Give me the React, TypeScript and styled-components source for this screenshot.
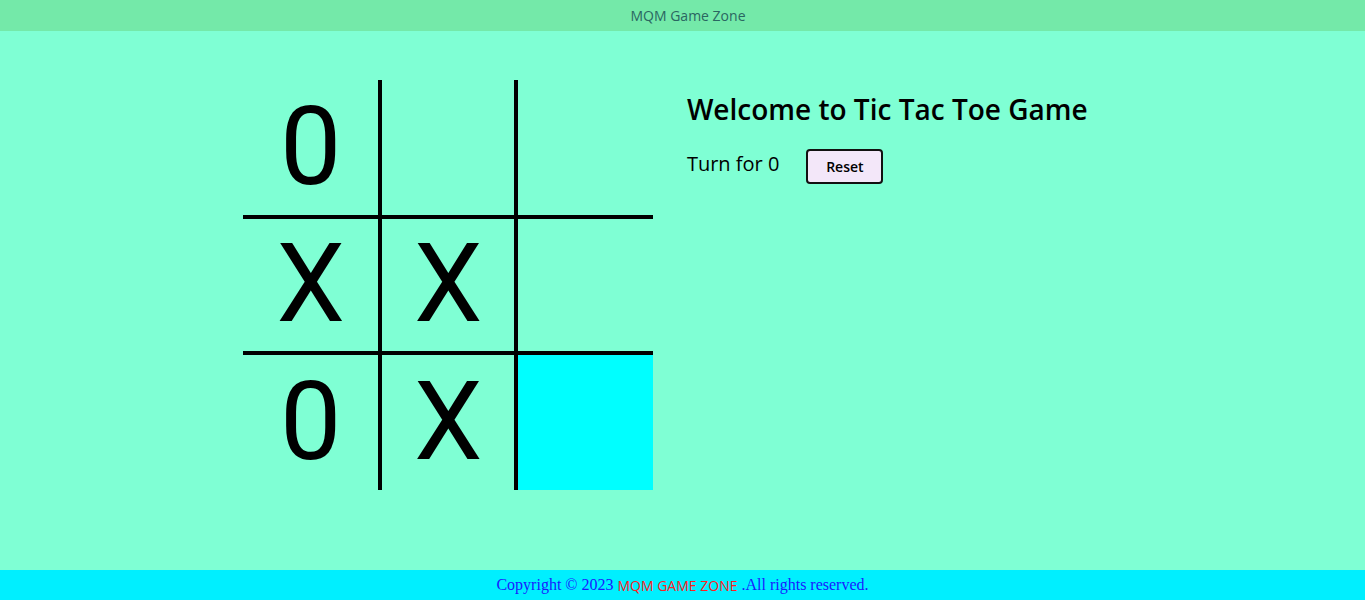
import React, { useState } from 'react';
import styled, { createGlobalStyle } from 'styled-components';

type Mark = 'X' | '0' | '';

const GlobalStyle = createGlobalStyle`
  * { box-sizing: content-box; }
  body {
    margin: 0;
    padding: 0;
    background-color: #7fffd4;
  }
`;

const initialBoard: Mark[] = ['0', '', '', 'X', 'X', '', '0', 'X', ''];

function App() {
  const [board, setBoard] = useState<Mark[]>(initialBoard);
  const [turn, setTurn] = useState<'X' | '0'>('0');

  const play = (i: number) => {
    if (board[i]) return;
    const next = [...board];
    next[i] = turn;
    setBoard(next);
    setTurn(turn === 'X' ? '0' : 'X');
  };

  const reset = () => {
    setBoard(['', '', '', '', '', '', '', '', '']);
    setTurn('X');
  };

  return (
    <Page>
      <GlobalStyle />
      <Nav>MQM Game Zone</Nav>
      <GameContainer>
        <Board>
          {board.map((mark, i) => (
            <Box
              key={i}
              $top={i > 2}
              $bottom={i < 6}
              $left={i % 3 !== 0}
              $right={i % 3 !== 2}
              $active={i === 8}
              onClick={() => play(i)}
            >
              {mark}
            </Box>
          ))}
        </Board>
        <GameInfo>
          <Title>Welcome to Tic Tac Toe Game</Title>
          <InfoRow>
            <Turn>Turn for {turn}</Turn>
            <ResetButton onClick={reset}>Reset</ResetButton>
          </InfoRow>
        </GameInfo>
      </GameContainer>
      <Footer>
        Copyright © 2023 <Brand>MQM GAME ZONE</Brand> .All rights reserved.
      </Footer>
    </Page>
  );
}

export default App;

const Page = styled.div`
  display: flex;
  flex-direction: column;
  min-height: 100vh;
`;

const Nav = styled.nav`
  height: 31px;
  display: flex;
  align-items: center;
  justify-content: center;
  padding-left: 11px;
  background-color: #74e9a9;
  color: #2a6661;
  font-family: 'Open Sans', sans-serif;
  font-size: 14px;
`;

const GameContainer = styled.div`
  display: flex;
  justify-content: center;
  margin-top: 49px;
`;

const Board = styled.div`
  display: grid;
  grid-template-columns: repeat(3, 10vw);
  grid-template-rows: repeat(3, 10vw);
  font-family: Roboto, sans-serif;
`;

const Box = styled.div<{
  $top: boolean;
  $bottom: boolean;
  $left: boolean;
  $right: boolean;
  $active: boolean;
}>`
  display: flex;
  align-items: center;
  justify-content: center;
  border: 2px solid black;
  border-top-width: ${({ $top }) => ($top ? '2px' : '0')};
  border-bottom-width: ${({ $bottom }) => ($bottom ? '2px' : '0')};
  border-left-width: ${({ $left }) => ($left ? '2px' : '0')};
  border-right-width: ${({ $right }) => ($right ? '2px' : '0')};
  background-color: ${({ $active }) => ($active ? '#00ffff' : 'transparent')};
  font-size: 8vw;
  line-height: 1;
  cursor: pointer;
`;

const GameInfo = styled.div`
  padding: 0 34px;
  font-family: 'Open Sans', sans-serif;
`;

const Title = styled.h1`
  margin: 10px 0 21px;
  font-size: 28px;
  font-weight: 600;
  color: #000;
`;

const InfoRow = styled.div`
  display: flex;
  align-items: center;
`;

const Turn = styled.span`
  margin-bottom: 6px;
  font-size: 20px;
  color: #000;
`;

const ResetButton = styled.button`
  margin: 0 27px;
  width: 77px;
  height: 35px;
  padding: 0;
  box-sizing: border-box;
  background: #f3e7f9;
  border: 2px solid #111;
  border-radius: 4px;
  font-family: 'Open Sans', sans-serif;
  font-size: 14px;
  font-weight: 600;
  color: #000;
  cursor: pointer;
`;

const Footer = styled.footer`
  margin-top: auto;
  height: 30px;
  display: flex;
  align-items: center;
  justify-content: center;
  white-space: pre;
  background-color: #00efff;
  color: #1a1aff;
  font-family: 'Liberation Serif', serif;
  font-size: 16px;
`;

const Brand = styled.span`
  color: #ff2020;
  font-family: 'Open Sans', sans-serif;
  font-size: 14px;
`;
